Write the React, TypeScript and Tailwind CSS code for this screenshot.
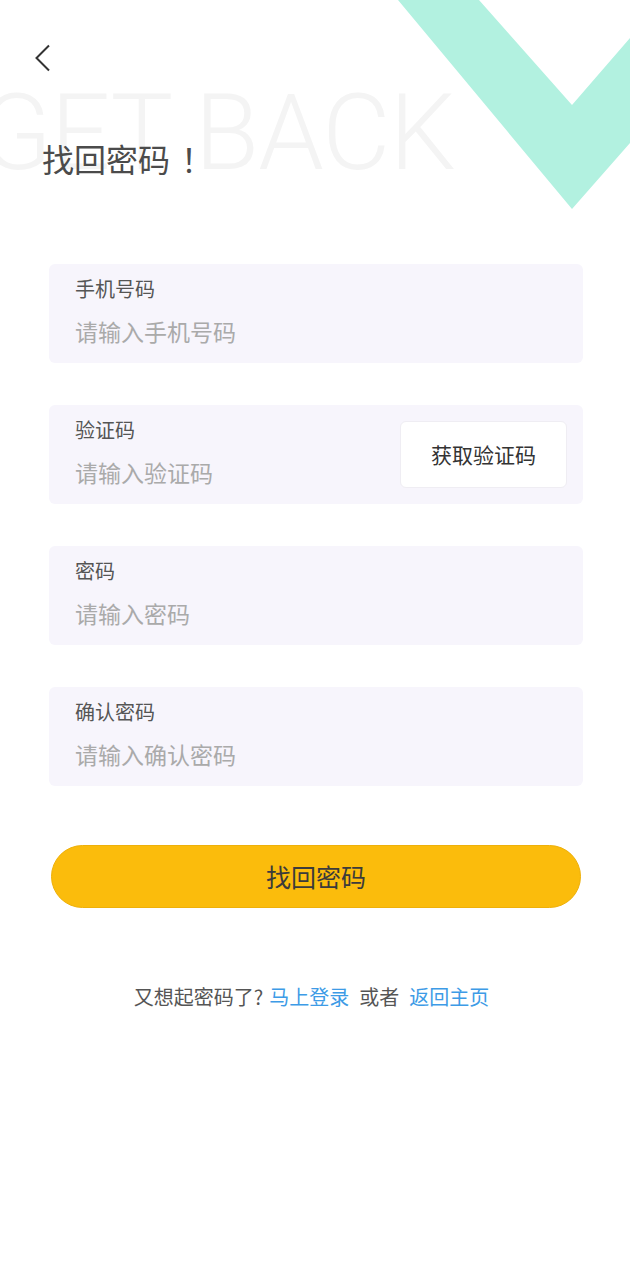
import React from "react";

const fields = [
  { label: "手机号码", placeholder: "请输入手机号码" },
  { label: "验证码", placeholder: "请输入验证码", code: true },
  { label: "密码", placeholder: "请输入密码" },
  { label: "确认密码", placeholder: "请输入确认密码" },
];

export default function App() {
  return (
    <div className="relative w-[630px] h-[1280px] overflow-hidden bg-white font-['Noto_Sans_CJK_SC','Noto_Sans',sans-serif]">
      {/* decorative background */}
      <svg className="absolute top-0 left-0" width="630" height="220" viewBox="0 0 630 220">
        <polygon points="398,0 479,0 572,105 630,38 630,143 572,209" fill="#b2f1e0" />
      </svg>
      <div className="absolute left-[-20px] top-[71px] text-[105px] leading-[126px] font-light tracking-[-1px] text-[#f4f4f4] font-['Roboto',sans-serif] whitespace-nowrap select-none">
        GET BACK
      </div>

      <div className="relative flex flex-col">
        {/* Header */}
        <div className="pt-[44px] pl-[34px]">
          <svg width="18" height="28" viewBox="0 0 18 28" fill="none">
            <polyline points="15,1.5 2.5,14 15,26.5" stroke="#333" strokeWidth="2" strokeLinejoin="miter" />
          </svg>
        </div>
        <h1 className="mt-[66px] pl-[42px] text-[32px] leading-[40px] text-[#4b4b4b] font-normal">
          找回密码<span className="ml-[11px]">！</span>
        </h1>

        {/* Form */}
        <div className="mt-[86px] flex flex-col gap-[42px] pl-[49px]">
          {fields.map((f) => (
            <div key={f.label} className="w-[534px] h-[99px] rounded-[6px] bg-[#f7f5fc] flex items-center justify-between pl-[26px] pr-[16px]">
              <div className="flex flex-col self-start pt-[12px]">
                <span className="text-[20px] leading-[26px] text-[#555]">{f.label}</span>
                <input
                  className="mt-[14px] w-[300px] bg-transparent text-[23px] leading-[30px] text-[#333] placeholder:text-[#aaa] outline-none"
                  placeholder={f.placeholder}
                />
              </div>
              {f.code && (
                <button className="w-[167px] h-[67px] rounded-[6px] bg-white border border-[#efedf3] text-[21px] text-[#333]">
                  获取验证码
                </button>
              )}
            </div>
          ))}
        </div>

        <div className="mt-[59px] px-[51px]">
          <button className="w-[530px] h-[63px] rounded-full bg-[#fbbc0c] border border-[#eeb00a] text-[25px] text-[#3b3b3b]">
            找回密码
          </button>
        </div>

        <p className="mt-[75px] pr-[7px] text-center text-[20px] leading-[28px] text-[#555]">
          又想起密码了?<span className="ml-[6px] text-[#3d9be6]">马上登录</span>
          <span className="ml-[10px]">或者</span>
          <span className="ml-[10px] text-[#3d9be6]">返回主页</span>
        </p>
      </div>
    </div>
  );
}
